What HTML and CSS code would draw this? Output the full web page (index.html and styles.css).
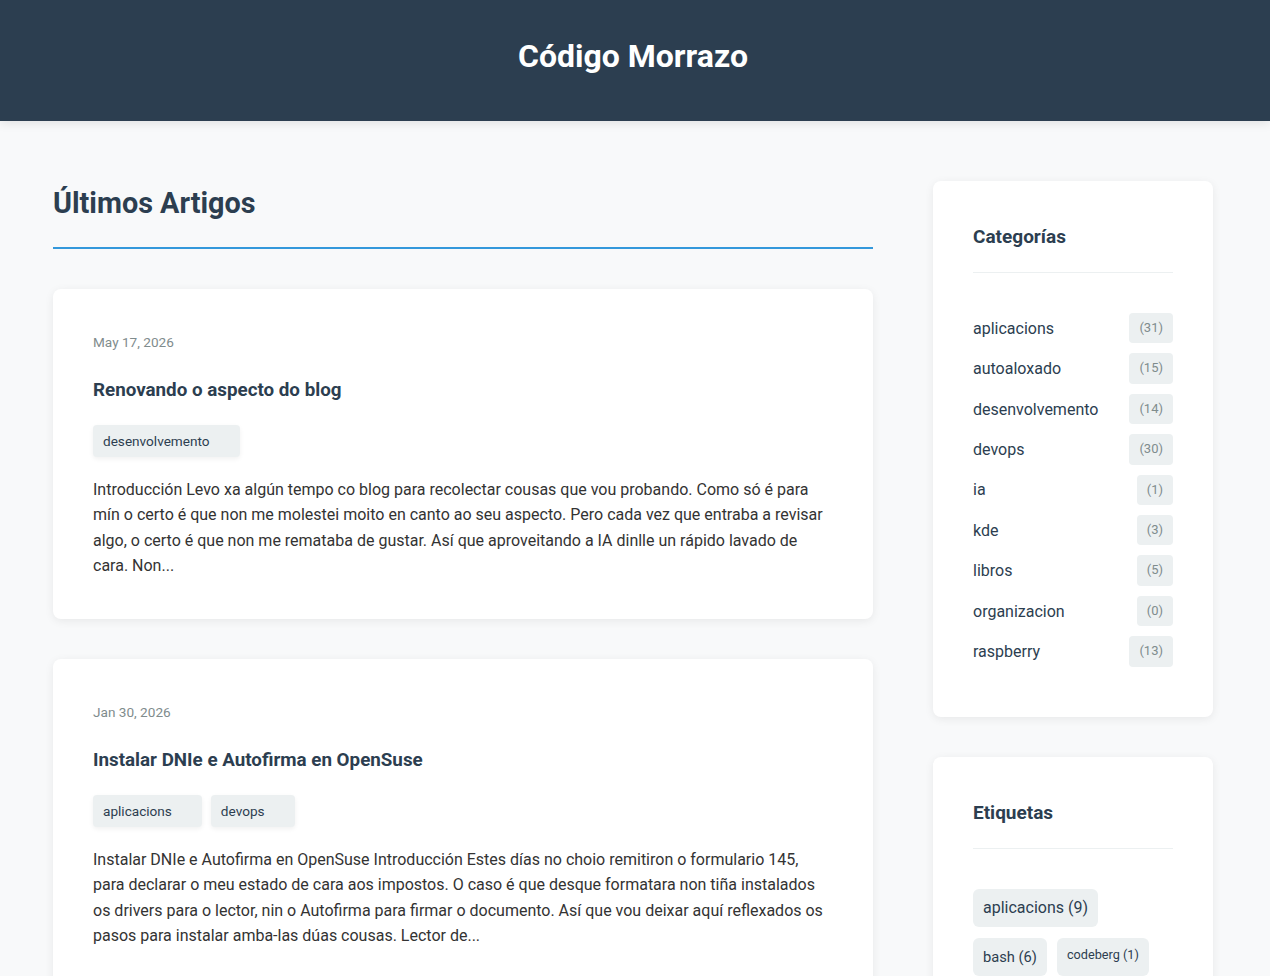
FILE: index.html
```html
<!DOCTYPE html>
<html lang="gl">
<head>
<meta charset="utf-8">
<title>Código Morrazo</title>
<link rel="stylesheet" href="styles.css">
</head>
<body>
<header class="site-header">
  <h1 class="site-title">Código Morrazo</h1>
</header>
<div class="layout">
  <main class="content">
    <h2 class="section-title">Últimos Artigos</h2>
    <article class="post-card">
      <div class="post-date">May 17, 2026</div>
      <h3 class="post-title">Renovando o aspecto do blog</h3>
      <div class="post-tags">
        <span class="tag">desenvolvemento</span>
      </div>
      <p class="post-excerpt">Introducción Levo xa algún tempo co blog para recolectar cousas que vou probando. Como só é para mín o certo é que non me molestei moito en canto ao seu aspecto. Pero cada vez que entraba a revisar algo, o certo é que non me remataba de gustar. Así que aproveitando a IA dinlle un rápido lavado de cara. Non...</p>
    </article>
    <article class="post-card">
      <div class="post-date">Jan 30, 2026</div>
      <h3 class="post-title">Instalar DNIe e Autofirma en OpenSuse</h3>
      <div class="post-tags">
        <span class="tag">aplicacions</span>
        <span class="tag">devops</span>
      </div>
      <p class="post-excerpt">Instalar DNIe e Autofirma en OpenSuse Introducción Estes días no choio remitiron o formulario 145, para declarar o meu estado de cara aos impostos. O caso é que desque formatara non tiña instalados os drivers para o lector, nin o Autofirma para firmar o documento. Así que vou deixar aquí reflexados os pasos para instalar amba-las dúas cousas. Lector de...</p>
    </article>
  </main>
  <aside class="sidebar">
    <section class="widget">
      <h3 class="widget-title">Categorías</h3>
      <ul class="cat-list">
        <li><span class="cat-name">aplicacions</span><span class="count">(31)</span></li>
        <li><span class="cat-name">autoaloxado</span><span class="count">(15)</span></li>
        <li><span class="cat-name">desenvolvemento</span><span class="count">(14)</span></li>
        <li><span class="cat-name">devops</span><span class="count">(30)</span></li>
        <li><span class="cat-name">ia</span><span class="count">(1)</span></li>
        <li><span class="cat-name">kde</span><span class="count">(3)</span></li>
        <li><span class="cat-name">libros</span><span class="count">(5)</span></li>
        <li><span class="cat-name">organizacion</span><span class="count">(0)</span></li>
        <li><span class="cat-name">raspberry</span><span class="count">(13)</span></li>
      </ul>
    </section>
    <section class="widget">
      <h3 class="widget-title">Etiquetas</h3>
      <div class="tag-cloud">
        <span class="cloud-tag size-l">aplicacions (9)</span>
        <span class="cloud-tag size-m">bash (6)</span>
        <span class="cloud-tag size-s">codeberg (1)</span>
      </div>
    </section>
  </aside>
</div>
</body>
</html>
```
FILE: styles.css
```css
* { box-sizing: border-box; }

html, body {
  margin: 0;
  padding: 0;
}

body {
  font-family: Roboto, "Liberation Sans", Arial, sans-serif;
  background: #f8f9fa;
  color: #333;
  overflow: hidden;
}

.site-header {
  background: #2c3e50;
  padding: 37px 4px 45px 0;
  text-align: center;
  box-shadow: 0 2px 10px rgba(0, 0, 0, 0.1);
}

.site-title {
  margin: 0;
  color: #fff;
  font-size: 32px;
  line-height: 39px;
  font-weight: 700;
}

.layout {
  width: 1160px;
  margin: 60px 0 0 53px;
  display: grid;
  grid-template-columns: 820px 280px;
  column-gap: 60px;
  align-items: start;
}

.section-title {
  margin: 0 0 40px;
  font-size: 28.8px;
  line-height: 45px;
  font-weight: 700;
  color: #2c3e50;
  padding-bottom: 21px;
  border-bottom: 2px solid #3498db;
}

.post-card {
  background: #fff;
  border-radius: 8px;
  padding: 40px 40px 41px;
  margin-bottom: 40px;
  box-shadow: 0 2px 10px rgba(0, 0, 0, 0.07);
}

.post-date {
  font-size: 13.6px;
  line-height: 26px;
  color: #7f8c8d;
}

.post-title {
  margin: 22px 0 22px;
  font-size: 18.8px;
  line-height: 26px;
  font-weight: 700;
  color: #2c3e50;
}

.post-tags {
  display: flex;
  gap: 9px;
}

.tag {
  display: inline-block;
  background: #ecf0f1;
  color: #2c3e50;
  font-size: 13.6px;
  line-height: 32px;
  padding: 0 30px 0 10px;
  border-radius: 4px;
  box-shadow: 0 2px 5px rgba(0, 0, 0, 0.06);
}

.post-excerpt {
  margin: 20px 0 0;
  font-size: 16px;
  line-height: 25.3px;
  color: #333;
}

.widget {
  background: #fff;
  border-radius: 8px;
  padding: 40px;
  margin-bottom: 40px;
  box-shadow: 0 2px 10px rgba(0, 0, 0, 0.07);
}

.widget-title {
  margin: 0 0 40px;
  font-size: 19px;
  line-height: 32px;
  font-weight: 700;
  color: #2c3e50;
  padding-bottom: 19px;
  border-bottom: 1px solid #ecf0f1;
}

.cat-list {
  list-style: none;
  margin: 0;
  padding: 0;
}

.cat-list li {
  display: flex;
  justify-content: space-between;
  align-items: center;
  margin-bottom: 10px;
}

.cat-name {
  font-size: 16px;
  color: #2c3e50;
}

.count {
  background: #ecf0f1;
  color: #7f8c8d;
  font-size: 13px;
  line-height: 20.4px;
  padding: 5px 10px;
  border-radius: 4px;
}

.tag-cloud {
  display: flex;
  flex-wrap: wrap;
  gap: 11px 10px;
}

.cloud-tag {
  display: inline-flex;
  align-items: center;
  height: 38px;
  padding: 0 10px;
  background: #ecf0f1;
  color: #2c3e50;
  border-radius: 6px;
}

.size-l { font-size: 16px; }
.size-m { font-size: 14.7px; }
.size-s { font-size: 12.7px; padding-bottom: 5px; }
```
